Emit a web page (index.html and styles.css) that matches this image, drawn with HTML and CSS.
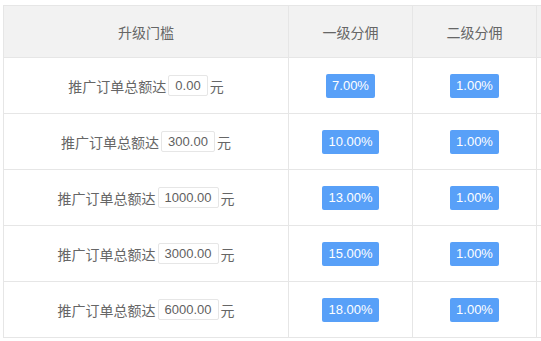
FILE: index.html
```html
<!DOCTYPE html>
<html lang="zh-CN">
<head>
<meta charset="utf-8">
<title>升级门槛</title>
<link rel="stylesheet" href="styles.css">
</head>
<body>
<table class="grid">
  <colgroup>
    <col class="c-threshold">
    <col class="c-rate">
    <col class="c-rate">
    <col class="c-more">
  </colgroup>
  <thead>
    <tr>
      <th>升级门槛</th>
      <th>一级分佣</th>
      <th>二级分佣</th>
      <th class="more"></th>
    </tr>
  </thead>
  <tbody>
    <tr>
      <td><span class="cond">推广订单总额达<span class="amount">0.00</span>元</span></td>
      <td><span class="badge">7.00%</span></td>
      <td><span class="badge">1.00%</span></td>
      <td class="more"></td>
    </tr>
    <tr>
      <td><span class="cond">推广订单总额达<span class="amount">300.00</span>元</span></td>
      <td><span class="badge">10.00%</span></td>
      <td><span class="badge">1.00%</span></td>
      <td class="more"></td>
    </tr>
    <tr>
      <td><span class="cond">推广订单总额达<span class="amount">1000.00</span>元</span></td>
      <td><span class="badge">13.00%</span></td>
      <td><span class="badge">1.00%</span></td>
      <td class="more"></td>
    </tr>
    <tr>
      <td><span class="cond">推广订单总额达<span class="amount">3000.00</span>元</span></td>
      <td><span class="badge">15.00%</span></td>
      <td><span class="badge">1.00%</span></td>
      <td class="more"></td>
    </tr>
    <tr>
      <td><span class="cond">推广订单总额达<span class="amount">6000.00</span>元</span></td>
      <td><span class="badge">18.00%</span></td>
      <td><span class="badge">1.00%</span></td>
      <td class="more"></td>
    </tr>
  </tbody>
</table>
</body>
</html>
```
FILE: styles.css
```css
html, body {
  overflow: hidden;
}
body {
  margin: 5px 0 0 3px;
  background: #fff;
  font-family: "Liberation Sans", "Noto Sans CJK SC", sans-serif;
  font-size: 14px;
  color: #666;
}
.grid {
  border-collapse: collapse;
  table-layout: fixed;
  width: 538px;
}
.c-threshold { width: 285px; }
.c-rate { width: 124px; }
.c-more { width: 5px; }
.grid th,
.grid td {
  border: 1px solid #e6e6e6;
  padding: 0;
  text-align: center;
  vertical-align: middle;
}
.grid .more {
  border-right: none;
}
.grid th {
  height: 51px;
  background: #f2f2f2;
  font-weight: normal;
  font-family: "Noto Sans CJK SC", sans-serif;
  font-size: 14px;
  color: #666;
}
.grid td {
  height: 55px;
}
.cond {
  display: inline-flex;
  align-items: center;
  font-family: "Noto Sans CJK SC", sans-serif;
  font-size: 14px;
  color: #666;
}
.amount {
  display: inline-block;
  height: 19px;
  line-height: 19px;
  margin: 0 2px;
  padding: 0 6px;
  border: 1px solid #e6e6e6;
  border-radius: 2px;
  font-family: "Liberation Sans", sans-serif;
  font-size: 13px;
  color: #5f5f5f;
}
.badge {
  display: inline-block;
  height: 24px;
  line-height: 24px;
  padding: 0 6px;
  border-radius: 2px;
  background: #58a0f8;
  color: #fff;
  font-family: "Liberation Sans", sans-serif;
  font-size: 13px;
}
```
